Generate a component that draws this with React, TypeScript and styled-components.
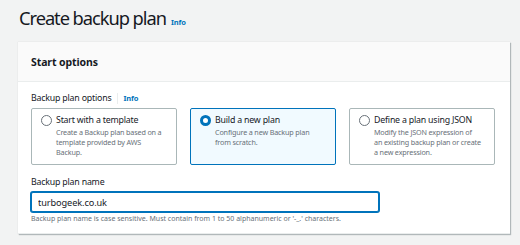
import React from "react";
import styled, { createGlobalStyle } from "styled-components";

const colors = {
  page: "#f2f3f3",
  text: "#16191f",
  muted: "#687078",
  link: "#0073bb",
  border: "#aab7b8",
  divider: "#eaeded",
  headerBg: "#fafafa",
  selectedBg: "#f1faff",
};

const GlobalStyle = createGlobalStyle`
  html, body {
    margin: 0;
    padding: 0;
    background: ${colors.page};
    font-family: "Noto Sans", "Open Sans", sans-serif;
    color: ${colors.text};
  }
`;

const Page = styled.div`
  width: 520px;
  height: 245px;
  overflow: hidden;
  padding: 0 10px 0 18px;
  box-sizing: border-box;
`;

const TitleRow = styled.div`
  display: flex;
  align-items: baseline;
  gap: 5px;
  height: 42px;
  padding-left: 1px;
`;

const Heading = styled.h1`
  margin: 0;
  font-size: 18.3px;
  font-weight: 400;
  line-height: 35px;
  letter-spacing: -1.05px;
`;

const InfoLink = styled.a`
  color: ${colors.link};
  font-size: 7.5px;
  font-weight: 700;
  letter-spacing: -0.1px;
  text-decoration: none;
`;

const Card = styled.section`
  background: #fff;
  box-shadow: 1px 1px 1px rgba(0, 28, 36, 0.25), 0 0 1px rgba(0, 28, 36, 0.15);
`;

const CardHeader = styled.div`
  background: ${colors.headerBg};
  border-bottom: 1px solid ${colors.divider};
  height: 39px;
  display: flex;
  align-items: center;
  padding: 0 13px;
  font-size: 10.5px;
  font-weight: 700;
  letter-spacing: -0.1px;
`;

const CardBody = styled.div`
  padding: 8px 13px 0;
  display: flex;
  flex-direction: column;
  font-size: 8.8px;
  letter-spacing: -0.2px;
`;

const LabelRow = styled.div`
  display: flex;
  align-items: center;
  height: 16px;
`;

const Sep = styled.span`
  width: 1px;
  height: 11px;
  background: ${colors.divider};
  margin: 0 5px 0 6px;
`;

const Tiles = styled.div`
  display: grid;
  grid-template-columns: repeat(3, 146px);
  gap: 13px;
  margin-top: 2px;
`;

const Tile = styled.label<{ selected?: boolean }>`
  box-sizing: border-box;
  height: 57px;
  border: 1px solid ${(p) => (p.selected ? colors.link : colors.border)};
  background: ${(p) => (p.selected ? colors.selectedBg : "#fff")};
  border-radius: 2px;
  padding: 5px 8px 0 9px;
  display: flex;
  gap: 4px;
`;

const Radio = styled.span<{ checked?: boolean }>`
  flex: none;
  box-sizing: border-box;
  width: 11px;
  height: 11px;
  margin-top: 1px;
  border-radius: 50%;
  border: ${(p) => (p.checked ? `3px solid ${colors.link}` : `1px solid ${colors.muted}`)};
  background: #fff;
`;

const TileText = styled.div`
  display: flex;
  flex-direction: column;
`;

const TileTitle = styled.div`
  line-height: 13px;
  white-space: nowrap;
`;

const TileDesc = styled.div`
  font-size: 7.2px;
  line-height: 10px;
  letter-spacing: -0.15px;
  color: ${colors.muted};
  white-space: nowrap;
`;

const FieldLabel = styled.div`
  margin-top: 11px;
  height: 14px;
`;

const Input = styled.input`
  box-sizing: border-box;
  width: 348px;
  height: 20px;
  margin-top: 2px;
  border: 1px solid ${colors.link};
  box-shadow: 0 0 0 1px ${colors.link};
  border-radius: 2px;
  padding: 0 6px;
  font-family: inherit;
  font-size: 9.2px;
  letter-spacing: -0.1px;
  color: ${colors.text};
  outline: none;
`;

const Hint = styled.div`
  font-size: 7px;
  letter-spacing: 0;
  color: ${colors.muted};
  margin: 2px -13px 0;
  padding: 0 13px 10px;
  border-bottom: 1px solid ${colors.divider};
`;

// description lines are kept as they wrap in the console
const options = [
  {
    title: "Start with a template",
    desc: ["Create a Backup plan based on a", "template provided by AWS", "Backup."],
  },
  {
    title: "Build a new plan",
    desc: ["Configure a new Backup plan", "from scratch."],
    selected: true,
  },
  {
    title: "Define a plan using JSON",
    desc: ["Modify the JSON expression of", "an existing backup plan or create", "a new expression."],
  },
];

export default function App() {
  return (
    <Page>
      <GlobalStyle />
      <TitleRow>
        <Heading>Create backup plan</Heading>
        <InfoLink>Info</InfoLink>
      </TitleRow>
      <Card>
        <CardHeader>Start options</CardHeader>
        <CardBody>
          <LabelRow>
            Backup plan options
            <Sep />
            <InfoLink>Info</InfoLink>
          </LabelRow>
          <Tiles>
            {options.map((o) => (
              <Tile key={o.title} selected={o.selected}>
                <Radio checked={o.selected} />
                <TileText>
                  <TileTitle>{o.title}</TileTitle>
                  {o.desc.map((line) => (
                    <TileDesc key={line}>{line}</TileDesc>
                  ))}
                </TileText>
              </Tile>
            ))}
          </Tiles>
          <FieldLabel>Backup plan name</FieldLabel>
          <Input defaultValue="turbogeek.co.uk" />
          <Hint>
            Backup plan name is case sensitive. Must contain from 1 to 50 alphanumeric or '-_.' characters.
          </Hint>
        </CardBody>
      </Card>
    </Page>
  );
}
